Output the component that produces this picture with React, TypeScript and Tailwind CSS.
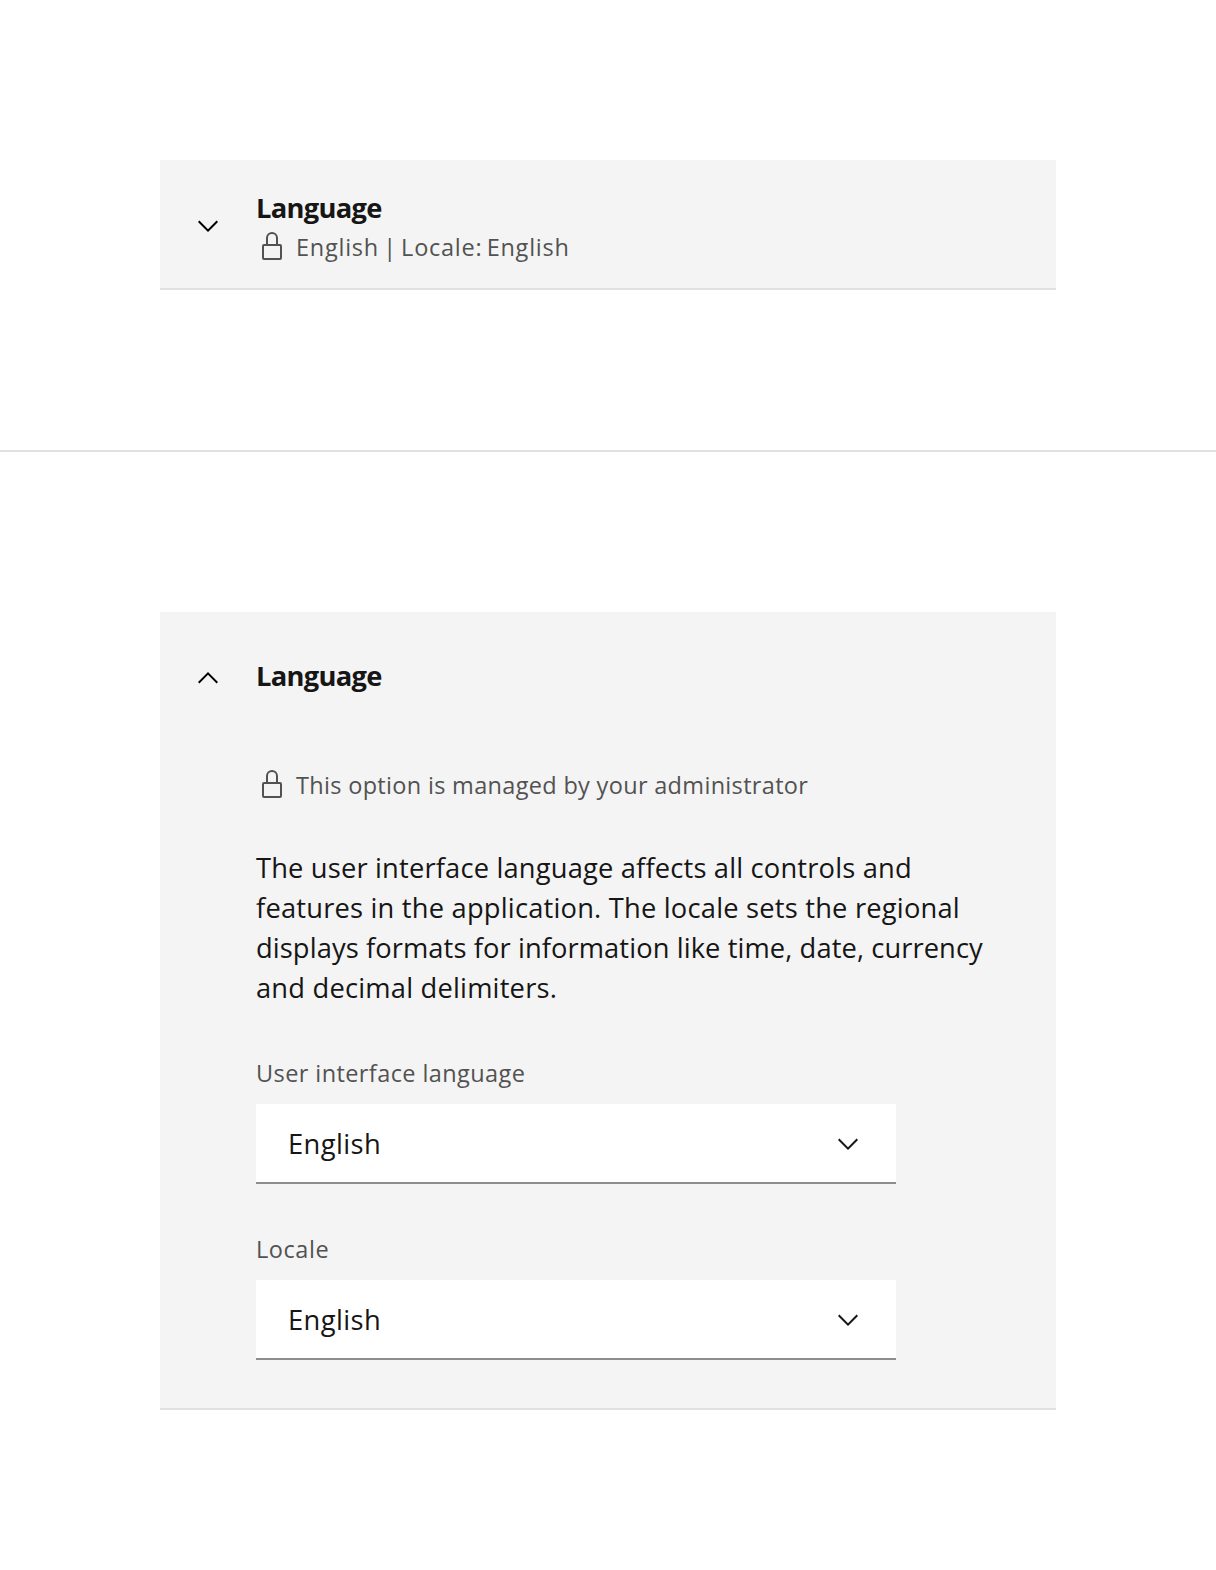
import type { ReactNode } from "react";

function Chevron({ up = false, className = "" }: { up?: boolean; className?: string }) {
  return (
    <svg viewBox="0 0 16 16" className={`h-8 w-8 shrink-0 ${className}`} fill="currentColor" aria-hidden="true">
      <path d={up ? "M8 5L13 10 12.3 10.7 8 6.4 3.7 10.7 3 10z" : "M8 11L3 6 3.7 5.3 8 9.6 12.3 5.3 13 6z"} />
    </svg>
  );
}

function Managed({ children }: { children: ReactNode }) {
  return (
    <div className="flex h-8 gap-2 text-[23.5px] text-[#525252]">
      <svg viewBox="0 0 32 32" className="h-8 w-8 shrink-0" fill="currentColor" aria-hidden="true">
        <path d="M24 14H22V8A6 6 0 0 0 10 8v6H8a2 2 0 0 0-2 2V28a2 2 0 0 0 2 2H24a2 2 0 0 0 2-2V16A2 2 0 0 0 24 14zM12 8a4 4 0 0 1 8 0v6H12zM24 28H8V16H24z" />
      </svg>
      <div className="leading-[34px]">{children}</div>
    </div>
  );
}

function Title() {
  return (
    <h2 className="h-10 text-[27.3px] leading-10 font-bold tracking-[-0.7px] text-[#161616]">Language</h2>
  );
}

function Select({ label, value }: { label: ReactNode; value: string }) {
  return (
    <div className="w-[640px]">
      <div className="h-8 text-[23.5px] leading-[30px] text-[#525252]">{label}</div>
      <button className="mt-[14px] flex h-20 w-full items-center justify-between border-b-2 border-[#8d8d8d] bg-white px-8 pt-0.5 text-[27.3px] leading-10 text-[#161616]">
        <span className="tracking-[0.4px]">{value}</span>
        <Chevron />
      </button>
    </div>
  );
}

export default function App() {
  return (
    <main className="h-[1570px] w-[1216px] overflow-hidden bg-white font-['Open_Sans',sans-serif] whitespace-nowrap">
      <section className="h-[452px] border-b-2 border-[#e0e0e0] px-40 pt-40">
        <div className="flex h-[130px] border-b-2 border-[#e0e0e0] bg-[#f4f4f4] pl-8">
          <Chevron className="mt-[50px] text-black" />
          <div className="ml-8 pt-7">
            <Title />
            <div className="mt-[2px]">
              <Managed>
                <span className="tracking-[0.75px] [word-spacing:-2.6px]">English | Locale: English</span>
              </Managed>
            </div>
          </div>
        </div>
      </section>
      <section className="px-40 pt-40">
        <div className="flex h-[798px] border-b-2 border-[#e0e0e0] bg-[#f4f4f4] pl-8">
          <Chevron up className="mt-[50px] text-black" />
          <div className="ml-8 pt-11">
            <Title />
            <div className="mt-[72px]">
              <Managed>
                <span className="tracking-[0.32px]">This option is managed by your administrator</span>
              </Managed>
            </div>
            <p className="mt-12 text-[27.3px] leading-10 text-[#161616]">
              <span className="tracking-[0.17px]">The user interface language affects all controls and</span>
              <br />
              <span className="tracking-[0.2px]">features in the application. The locale sets the regional</span>
              <br />
              <span className="tracking-[0.09px]">displays formats for information like time, date, currency</span>
              <br />
              <span className="tracking-[0.2px]">and decimal delimiters.</span>
            </p>
            <div className="mt-[50px] flex flex-col gap-[50px]">
              <Select label={<span className="tracking-[0.41px]">User interface language</span>} value="English" />
              <Select label={<span className="tracking-[0.55px]">Locale</span>} value="English" />
            </div>
          </div>
        </div>
      </section>
    </main>
  );
}
